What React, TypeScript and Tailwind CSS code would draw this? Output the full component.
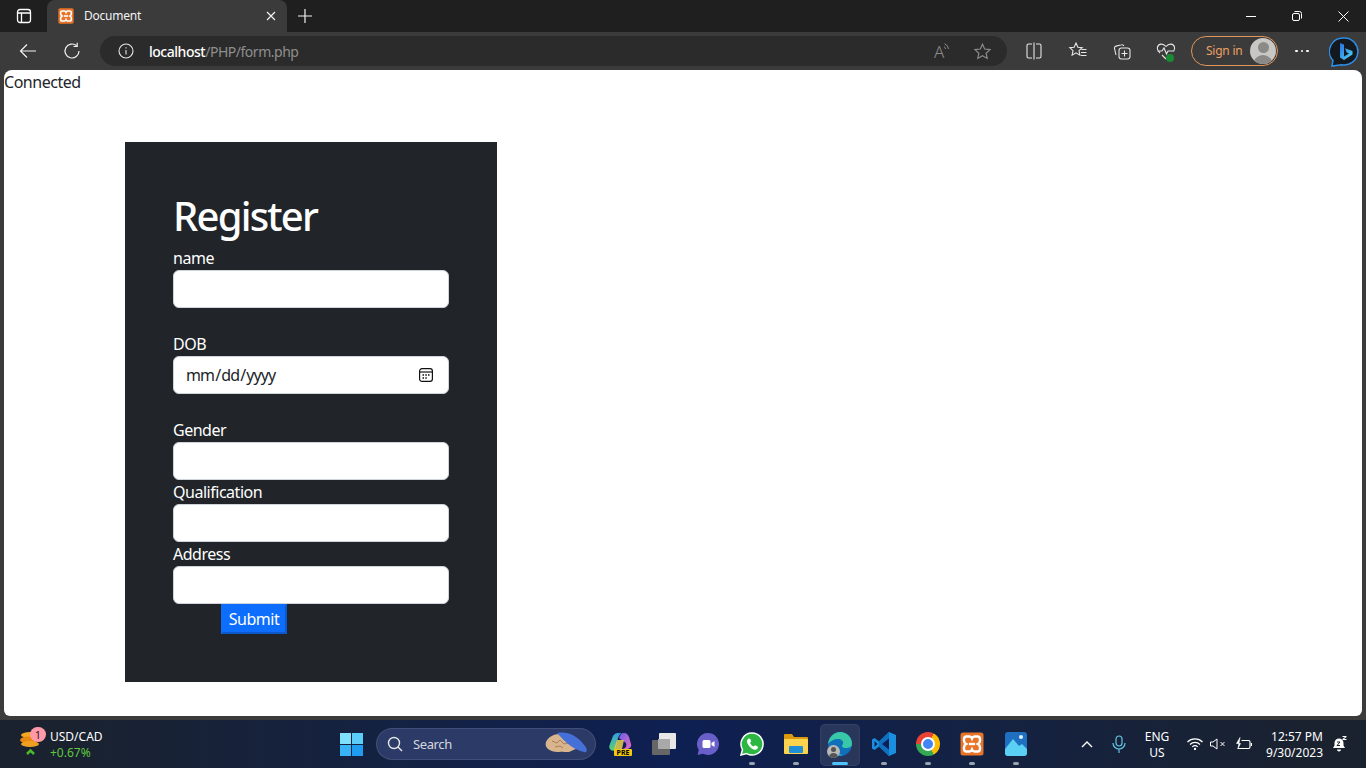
import type { ReactNode } from 'react';

const Slot = ({ w = 'w-[44px]', children }: { w?: string; children: ReactNode }) => (
  <div className={`${w} h-full flex items-center justify-center shrink-0`}>{children}</div>
);

const XamppIcon = ({ size }: { size: number }) => (
  <svg width={size} height={size} viewBox="0 0 24 24">
    <rect x="0.5" y="0.5" width="23" height="23" rx="2.5" fill="#e8742a" />
    <path d="M6.500 4.500h3.100c1 0 1.900.8 2.400 2 .5-1.200 1.400-2 2.400-2h3.100c1.600 0 2.500 1.100 2.500 2.700v1.600c0 1.500-.8 2.500-2.200 3.200 1.400.7 2.200 1.700 2.200 3.200v1.600c0 1.600-.9 2.700-2.500 2.700h-3.100c-1 0-1.900-.8-2.400-2-.5 1.200-1.400 2-2.400 2H6.500C4.900 19.500 4 18.400 4 16.800v-1.600c0-1.500.8-2.500 2.200-3.200C4.800 11.300 4 10.300 4 8.800V7.200C4 5.600 4.900 4.500 6.500 4.500Z" fill="none" stroke="#fff" strokeWidth="2.400" />
    <path d="M9 12h6" stroke="#fff" strokeWidth="2.400" />
  </svg>
);

const FormRow = ({ label, spaced = false }: { label: string; spaced?: boolean }) => (
  <div className={spaced ? 'mb-6' : ''}>
    <label className="block text-white leading-6">{label}</label>
    <input
      type="text"
      className="block w-full h-[38px] px-3 py-1.5 bg-white text-[#212529] text-base border border-[#ced4da] rounded-md outline-none"
    />
  </div>
);

const DateRow = () => (
  <div className="mb-6">
    <label className="block text-white leading-6">DOB</label>
    <div className="relative">
      <input
        type="date"
        className="block w-full h-[38px] pl-[11px] pr-3 py-1.5 bg-white text-[#212529] text-base tracking-[-0.055em] border border-[#ced4da] rounded-md outline-none [&::-webkit-calendar-picker-indicator]:opacity-0"
      />
      <svg className="absolute left-[245px] top-[11px] pointer-events-none" width="16" height="16" viewBox="0 0 16 16" fill="none" stroke="#111" strokeWidth="1.200">
        <rect x="1.600" y="1.600" width="12.800" height="12.800" rx="2.400" />
        <path d="M1.600 5h12.800" />
        <path d="M4.500 8h1.500M7.300 8h1.500M10 8h1.500M4.500 11h1.500M7.300 11h1.500" strokeWidth="1.400" />
      </svg>
    </div>
  </div>
);

const TabStrip = () => (
  <div className="h-[32px] bg-[#1f1f1f] flex shrink-0">
    <Slot w="w-[47px]">
      <svg width="16" height="16" viewBox="0 0 16 16" fill="none" stroke="#fff" strokeWidth="1.300">
        <rect x="1.500" y="1.500" width="13" height="13" rx="2.500" />
        <path d="M1.500 5h13M5.500 5v9.500" />
      </svg>
    </Slot>
    <div className="w-[240px] h-full bg-[#3b3b3b] rounded-t-lg flex items-center pl-[11px] pr-[11px]">
      <XamppIcon size={16} />
      <span className="ml-[10px] text-[12px] tracking-[-0.02em] text-[#f2f2f2] flex-1">Document</span>
      <svg width="10" height="10" viewBox="0 0 10 10" stroke="#f2f2f2" strokeWidth="1.200">
        <path d="M1 1l8 8M9 1l-8 8" />
      </svg>
    </div>
    <Slot w="w-[36px]">
      <svg width="14" height="14" viewBox="0 0 14 14" stroke="#f2f2f2" strokeWidth="1.200">
        <path d="M7 0v14M0 7h14" />
      </svg>
    </Slot>
    <div className="flex-1" />
    <div className="flex h-full">
      <Slot w="w-[46px]">
        <div className="w-[10px] h-px bg-white" />
      </Slot>
      <Slot w="w-[46px]">
        <svg width="10" height="10" viewBox="0 0 10 10" fill="none" stroke="#fff">
          <rect x="0.500" y="2.500" width="7" height="7" rx="1.500" />
          <path d="M2.500 .5h5a2 2 0 0 1 2 2v5" />
        </svg>
      </Slot>
      <Slot w="w-[46px]">
        <svg width="11" height="11" viewBox="0 0 11 11" stroke="#fff">
          <path d="M.5.500l10 10M10.500.500l-10 10" />
        </svg>
      </Slot>
    </div>
  </div>
);

const ToolIcon = ({ children }: { children: ReactNode }) => (
  <Slot>
    <svg width="20" height="20" viewBox="0 0 20 20" fill="none" stroke="#e6e6e6" strokeWidth="1.100">
      {children}
    </svg>
  </Slot>
);

const Toolbar = () => (
  <div className="h-[38px] bg-[#3b3b3b] flex items-center shrink-0">
    <Slot w="w-[56px]">
      <svg width="18" height="16" viewBox="0 0 18 16" fill="none" stroke="#f2f2f2" strokeWidth="1.200">
        <path d="M17 8H1.500M8 1.500 1.500 8 8 14.500" />
      </svg>
    </Slot>
    <Slot w="w-[32px]">
      <svg width="18" height="18" viewBox="0 0 18 18" fill="none" stroke="#f2f2f2" strokeWidth="1.200">
        <path d="M16 9a7 7 0 1 1-2.200-5.100" />
        <path d="M14.200 .8v3.700h-3.700" />
      </svg>
    </Slot>
    <div className="w-[12px] shrink-0" />
    <div className="w-[907px] h-[30px] rounded-[15px] bg-[#2b2b2b] flex items-center shrink-0">
      <Slot w="w-[52px]">
        <svg width="16" height="16" viewBox="0 0 16 16" fill="none" stroke="#e6e6e6" strokeWidth="1.100">
          <circle cx="8" cy="8" r="7" />
          <path d="M8 7v4.500M8 4.200v1.300" />
        </svg>
      </Slot>
      <span className="-ml-[3px] text-[14px] text-white font-medium">localhost</span>
      <span className="text-[14px] text-[#8e8e8e]">/PHP/form.php</span>
      <div className="flex-1" />
      <div className="w-[40px] flex items-start justify-center">
        <span className="text-[#8a8a8a] text-[17px] leading-none font-light">A</span>
        <svg className="-ml-px" width="7" height="9" viewBox="0 0 7 9" fill="none" stroke="#8a8a8a" strokeWidth="1">
          <path d="M1 3.500a3 3 0 0 1 1.500 2.500M1.500 .8A6 6 0 0 1 5.500 6" />
        </svg>
      </div>
      <Slot w="w-[40px]">
        <svg width="17" height="17" viewBox="0 0 17 17" fill="none" stroke="#8a8a8a" strokeWidth="1.200">
          <path d="M8.500 1.200 10.700 6l5.300.6-3.900 3.600 1.100 5.200-4.700-2.700-4.700 2.700 1.100-5.200L1 6.600 6.300 6Z" />
        </svg>
      </Slot>
      <div className="w-[5px]" />
    </div>
    <div className="w-[5px] shrink-0" />
    <ToolIcon>
      <path d="M8 3H4.500A1.500 1.500 0 0 0 3 4.500v11A1.500 1.500 0 0 0 4.500 17H8M12 3h3.500A1.500 1.500 0 0 1 17 4.500v11a1.500 1.500 0 0 1-1.500 1.500H12M10 1.500v17" />
    </ToolIcon>
    <ToolIcon>
      <path d="M8 2 9.900 6.200l4.300.5-3.200 3 .9 4.500L8 11.900l-3.900 2.300.9-4.500-3.200-3 4.300-.5ZM13.500 8.500h5M13 11.500h5.500M13 14.500h5.500" />
    </ToolIcon>
    <ToolIcon>
      <rect x="7" y="7" width="11" height="11" rx="2.500" />
      <path d="M12.500 9.500v6M9.500 12.500h6M4 14 2.500 7.500a2 2 0 0 1 1.500-2.400l5.500-1.300a2 2 0 0 1 2.400 1.200" />
    </ToolIcon>
    <Slot>
      <div className="relative w-[20px] h-[20px]">
        <svg width="20" height="20" viewBox="0 0 20 20" fill="none" stroke="#e6e6e6" strokeWidth="1.100">
          <path d="M4 12C1.500 9.500 1 8 1.500 6 2.500 2.500 7 2 10 5.500 13 2 17.500 2.500 18.500 6c.5 2 0 3-1 4.500M1.500 10H6l2-3 2.500 6 1.500-3h6M6 14l4 4" />
        </svg>
        <div className="absolute right-[2px] bottom-[-1px] w-[8px] h-[8px] rounded-full bg-[#1a8a33]" />
      </div>
    </Slot>
    <div className="w-[3px] shrink-0" />
    <div className="w-[87px] h-[30px] rounded-[15px] border border-[#e0965a] flex items-center justify-between pl-[14px] pr-[1px] shrink-0">
      <span className="text-[12px] tracking-[-0.02em] text-[#eda063]">Sign in</span>
      <div className="w-[26px] h-[26px] rounded-full bg-[#c9c7c4] overflow-hidden flex flex-col items-center">
        <div className="w-[11px] h-[11px] rounded-full bg-[#8c8a88] mt-[4px] shrink-0" />
        <div className="w-[20px] h-[12px] rounded-t-full bg-[#8c8a88] mt-[2px] shrink-0" />
      </div>
    </div>
    <Slot w="w-[48px]">
      <div className="flex gap-[3px]">
        <div className="w-[2.500px] h-[2.500px] rounded-full bg-white" />
        <div className="w-[2.500px] h-[2.500px] rounded-full bg-white" />
        <div className="w-[2.500px] h-[2.500px] rounded-full bg-white" />
      </div>
    </Slot>
    <Slot w="w-[36px]">
      <svg width="31" height="31" viewBox="0 0 31 31" fill="none">
        <defs>
          <linearGradient id="bingB" x1="0" y1="0" x2="1" y2="1">
            <stop offset="0" stopColor="#2a6fe0" />
            <stop offset="1" stopColor="#4fd8f2" />
          </linearGradient>
        </defs>
        <path d="M15.500 2a13.500 13.500 0 1 1-3 26.700L3 30l1-5.500A13.500 13.500 0 0 1 15.500 2Z" fill="#14181f" stroke="#2d8fe8" strokeWidth="1.500" />
        <path d="M11 7l4 1.500v12l5-3-2.500-1.200-1.500-4 7.500 2.800v3.500L15 24l-4-2.500Z" fill="url(#bingB)" />
      </svg>
    </Slot>
  </div>
);

const Page = () => (
  <div className="flex-1 mx-1 bg-white rounded-t-[8px] rounded-b-[6px] overflow-hidden text-[#212529] text-base">
    <div className="leading-6 h-[24px]">Connected</div>
    <div className="ml-[121px] mt-12 w-[372px] h-[540px] bg-[#212529] p-12">
      <h1 className="h-[48px] text-[40px] leading-[52px] font-medium tracking-[-0.045em] text-white mb-2">Register</h1>
      <FormRow label="name" spaced />
      <DateRow />
      <FormRow label="Gender" />
      <FormRow label="Qualification" />
      <FormRow label="Address" />
      <button className="block ml-12 w-[66px] h-[30px] bg-[#0d6efd] text-white text-base border-2 border-[#0a58ca] border-t-[#0d6efd] border-l-[#0d6efd]">
        Submit
      </button>
    </div>
  </div>
);

const TaskIcon = ({ children, open = false, active = false }: { children: ReactNode; open?: boolean; active?: boolean }) => (
  <div className="relative w-[44px] h-full flex items-center justify-center shrink-0">
    {active && <div className="absolute left-[2px] right-[2px] top-[4px] bottom-[2px] rounded-[5px] bg-white/10 border border-white/5" />}
    <div className="relative">{children}</div>
    {open && !active && <div className="absolute bottom-[3px] left-[19px] w-[6px] h-[3px] rounded-full bg-[#9aa3b0]" />}
    {active && <div className="absolute bottom-[3px] left-[14px] w-[16px] h-[3px] rounded-full bg-[#4cc2ff]" />}
  </div>
);

const Taskbar = () => (
  <div className="h-[48px] shrink-0 flex items-center bg-gradient-to-r from-[#1a2230] from-[5%] via-[#0e1f52] via-50% to-[#1a2230] to-95% text-white tracking-normal">
    <div className="w-[329px] h-full flex items-center pl-[19px] shrink-0">
      <div className="relative w-[22px] h-[30px]">
        <svg width="22" height="30" viewBox="0 0 22 30">
          <ellipse cx="11" cy="6" rx="9" ry="3" fill="#f5a623" />
          <ellipse cx="9.500" cy="11" rx="8.500" ry="3.500" fill="#e88a10" />
          <ellipse cx="11" cy="15" rx="9" ry="3" fill="#f0a020" />
          <path d="M8 25l3.500-3.500L15 25" fill="none" stroke="#4fb82c" strokeWidth="2.500" />
        </svg>
        <div className="absolute left-[11px] top-[-2px] w-[16px] h-[15px] rounded-full bg-[#ff9aa8] text-[#3a1a20] text-[11px] leading-[15px] text-center">1</div>
      </div>
      <div className="ml-[9px] pt-[2px] text-[12px] leading-4">
        <div className="text-white">USD/CAD</div>
        <div className="text-[#5fc73f]">+0.67%</div>
      </div>
    </div>
    <TaskIcon>
      <div className="grid grid-cols-2 gap-px w-[23px] h-[23px]">
        <div className="bg-[#7fe0fb]" />
        <div className="bg-[#5ccdf8]" />
        <div className="bg-[#37b4f5]" />
        <div className="bg-[#1f9df0]" />
      </div>
    </TaskIcon>
    <div className="w-[220px] h-[32px] ml-[3px] mr-[2px] rounded-full bg-[#2c3a68] border border-white/10 flex items-center pl-[10px] pr-[6px] shrink-0">
      <svg width="16" height="16" viewBox="0 0 16 16" fill="none" stroke="#e6e6e6" strokeWidth="1.400">
        <circle cx="7" cy="7" r="5.500" />
        <path d="M11 11l4 4" />
      </svg>
      <span className="ml-[10px] pt-[2px] text-[13px] tracking-[-0.03em] text-[#d5d8de] flex-1">Search</span>
      <svg width="44" height="24" viewBox="0 0 44 24">
        <path d="M1 10c2-5 8-8 13-8 6 0 12 4 18 9l4 3c1 2 0 4-3 3-3-1-5 2-9 3-4 .5-6-1-10 0-4 .5-8-1-11-3-2-2-3-4-2-7Z" fill="#d9b58e" />
        <path d="M7 9l5 2 3-3 4 4 4-1M10 15l5-1 3 2" fill="none" stroke="#9a7048" strokeWidth=".8" />
        <path d="M12 1c10-2 20 2 28 13 3 4 2 7-1 6-10-2-18-9-27-19Z" fill="#4470d8" />
      </svg>
    </div>
    <TaskIcon>
      <div className="relative w-[24px] h-[24px]">
        <svg width="24" height="24" viewBox="0 0 24 24">
          <defs>
            <linearGradient id="copA" x1="0" y1="0" x2="0" y2="1">
              <stop offset="0" stopColor="#2f9fe8" />
              <stop offset="1" stopColor="#5fd06a" />
            </linearGradient>
            <linearGradient id="copB" x1="0" y1="0" x2="1" y2="1">
              <stop offset="0" stopColor="#6a5fe8" />
              <stop offset="1" stopColor="#e86ac0" />
            </linearGradient>
          </defs>
          <path d="M5 4c1-2 3-3 5-3h5c-3 0-4 2-5 5L7 18c-1 1-4 1-5-1-1-1-1-3 0-5Z" fill="url(#copA)" />
          <path d="M11 6c1-3 2-5 5-5 3 0 4 2 5 4l2 7c1 3-2 5-5 5h-3c3-1 4-3 3-6Z" fill="url(#copB)" />
          <path d="M9 8h7l-2 9H6Z" fill="#e8d050" opacity=".85" />
        </svg>
        <div className="absolute right-0 bottom-0 w-[18px] h-[7px] rounded-[1px] bg-[#f2c811] text-black text-[7px] leading-[7px] text-center font-bold">PRE</div>
      </div>
    </TaskIcon>
    <TaskIcon>
      <div className="relative w-[24px] h-[22px]">
        <div className="absolute right-0 top-0 w-[17px] h-[16px] bg-[#e8e8e8] rounded-[1px]" />
        <div className="absolute left-0 bottom-0 w-[18px] h-[15px] bg-[#666] rounded-[1px]" />
        <div className="absolute left-[6px] top-[6px] w-[12px] h-[10px] bg-[#a9a9a9]" />
      </div>
    </TaskIcon>
    <TaskIcon>
      <svg width="24" height="24" viewBox="0 0 24 24">
        <path d="M12 1a11 11 0 1 1-5 20.800L1.500 23l1.300-5A11 11 0 0 1 12 1Z" fill="#6a5fc9" />
        <rect x="6.500" y="8" width="8" height="8" rx="1.500" fill="#fff" />
        <path d="M15.500 11l3-2v6l-3-2Z" fill="#fff" />
      </svg>
    </TaskIcon>
    <TaskIcon open>
      <svg width="24" height="24" viewBox="0 0 24 24">
        <path d="M12 1a11 11 0 1 1-5.300 20.600L1 23l1.500-5.500A11 11 0 0 1 12 1Z" fill="#2bb741" stroke="#fff" strokeWidth="1.500" />
        <path d="M8.500 6.500c-1.500 1-2 3-1 5 1 2.500 3.500 5 6 6 2 .7 3.500 0 4.500-1.500l-.3-1.500-2.700-1.300-1.200 1.300c-1.500-.5-3-2-3.800-3.800l1.200-1.200L10.200 6.800Z" fill="#fff" />
      </svg>
    </TaskIcon>
    <TaskIcon open>
      <svg width="24" height="22" viewBox="0 0 24 22">
        <path d="M0 2a1 1 0 0 1 1-1h7l2 3h13a1 1 0 0 1 1 1v3H0Z" fill="#d99a10" />
        <rect y="6" width="24" height="15" rx="1" fill="#fcd34d" />
        <rect x="5" y="13" width="14" height="7" rx="1" fill="#1f8fd8" />
      </svg>
    </TaskIcon>
    <TaskIcon active>
      <div className="relative w-[24px] h-[24px]">
        <svg width="24" height="24" viewBox="0 0 24 24">
          <circle cx="12" cy="12" r="12" fill="#0f6fb8" />
          <path d="M0 12C1 5 6 0 12 0c7 0 12 5 12 12 0 3-3 4-6 4-4 0-5-2-3-4 1-3-2-5-5-5-4 0-8 2-10 5Z" fill="#38c8a8" />
          <path d="M12 24c-6 0-10-4-11-9 2 5 8 8 13 7 1 1 0 2-2 2Z" fill="#1f9ae0" />
        </svg>
        <div className="absolute -left-[1px] -bottom-[2px] w-[13px] h-[13px] rounded-full bg-[#b8b8b8] flex flex-col items-center overflow-hidden">
          <div className="w-[5px] h-[5px] rounded-full bg-[#555] mt-[2px] shrink-0" />
          <div className="w-[9px] h-[5px] rounded-t-full bg-[#555] mt-px shrink-0" />
        </div>
      </div>
    </TaskIcon>
    <TaskIcon open>
      <svg width="24" height="24" viewBox="0 0 24 24">
        <path d="M17 0 24 3v18l-7 3L7 14.500 2.500 18 0 16.500V7.500L2.500 6 7 9.500Z" fill="#1a8fe0" />
        <path d="M17 0v24L7 14.500V9.500Z" fill="#0f6fc0" />
        <path d="M17 6.500v11L10 12Z" fill="#0e1f52" />
        <path d="M2.500 9v6L5.500 12Z" fill="#0e1f52" />
      </svg>
    </TaskIcon>
    <TaskIcon open>
      <div className="w-[24px] h-[24px] rounded-full bg-[conic-gradient(from_30deg,#fbbc05_0_120deg,#34a853_120deg_240deg,#ea4335_240deg_360deg)] flex items-center justify-center">
        <div className="w-[10px] h-[10px] rounded-full bg-[#4285f4] border-2 border-white box-content" />
      </div>
    </TaskIcon>
    <TaskIcon open>
      <XamppIcon size={24} />
    </TaskIcon>
    <TaskIcon open>
      <svg width="22" height="24" viewBox="0 0 22 24">
        <rect width="22" height="24" rx="3" fill="#1f6fc0" />
        <path d="M0 22V17L8 7l6 7 3-2 5 5v4a3 3 0 0 1-3 3H3a3 3 0 0 1-3-2Z" fill="#5ad0f5" />
        <circle cx="16" cy="5" r="2" fill="#e6f0fa" />
      </svg>
    </TaskIcon>
    <div className="w-[27px] shrink-0" />
    <Slot w="w-[44px]">
      <svg width="12" height="8" viewBox="0 0 12 8" fill="none" stroke="#fff" strokeWidth="1.400">
        <path d="M1 7l5-5 5 5" />
      </svg>
    </Slot>
    <Slot w="w-[20px]">
      <svg width="14" height="18" viewBox="0 0 14 18" fill="none" stroke="#63c6e8" strokeWidth="1.200">
        <rect x="4" y="1" width="6" height="10" rx="3" />
        <path d="M1 8a6 6 0 0 0 12 0M7 14v4" />
      </svg>
    </Slot>
    <div className="w-[56px] pt-[2px] shrink-0 text-center text-[12px] leading-4 text-white">
      <div>ENG</div>
      <div>US</div>
    </div>
    <Slot w="w-[20px]">
      <svg width="16" height="12" viewBox="0 0 16 12" fill="none" stroke="#fff" strokeWidth="1.100">
        <path d="M.5 4a10.500 10.500 0 0 1 15 0M3 6.500a7 7 0 0 1 10 0M5.300 8.800a3.700 3.700 0 0 1 5.400 0" />
        <circle cx="8" cy="11" r=".6" fill="#fff" />
      </svg>
    </Slot>
    <Slot w="w-[26px]">
      <svg width="16" height="12" viewBox="0 0 16 12" fill="none" stroke="#fff" strokeWidth="1">
        <path d="M.5 4v4h2.500L7 11V1L3 4ZM10.500 4l4 4M14.500 4l-4 4" />
      </svg>
    </Slot>
    <Slot w="w-[24px]">
      <svg width="17" height="14" viewBox="0 0 17 14" fill="none" stroke="#fff" strokeWidth="1.200">
        <path d="M6.500 3.500h7a1.500 1.500 0 0 1 1.500 1.500v5a1.500 1.500 0 0 1-1.500 1.500H2.500" />
        <path d="M16.500 6v3" />
        <path d="M5 .5 1.500 6.500h4L3 11.500Z" fill="#fff" strokeWidth=".6" />
      </svg>
    </Slot>
    <div className="w-[68px] pt-px text-right text-[12px] leading-4 text-white shrink-0">
      <div>12:57 PM</div>
      <div>9/30/2023</div>
    </div>
    <Slot w="w-[32px]">
      <svg width="15" height="17" viewBox="0 0 15 17" fill="#fff">
        <path d="M7 2.500a4.500 4.500 0 0 0-4.500 4.500v2.500L1 12h12l-1.500-2.500V7A4.500 4.500 0 0 0 7 2.500ZM5 13.500h4a2 2 0 0 1-4 0Z" />
        <path d="M10.500 0h4v1l-2.500 2h2.500v1h-4V3L13 1h-2.500Z" />
        <path d="M5 6h3L5 9.500h3" fill="none" stroke="#1a2230" strokeWidth="1" />
      </svg>
    </Slot>
  </div>
);

const App = () => {
  return (
    <main className="w-[1366px] h-[768px] flex flex-col bg-[#3b3b3b] overflow-hidden font-['Noto_Sans','Liberation_Sans',sans-serif] tracking-[-0.03em]">
      <TabStrip />
      <Toolbar />
      <Page />
      <div className="h-[4px] shrink-0" />
      <Taskbar />
    </main>
  );
};

export default App;
